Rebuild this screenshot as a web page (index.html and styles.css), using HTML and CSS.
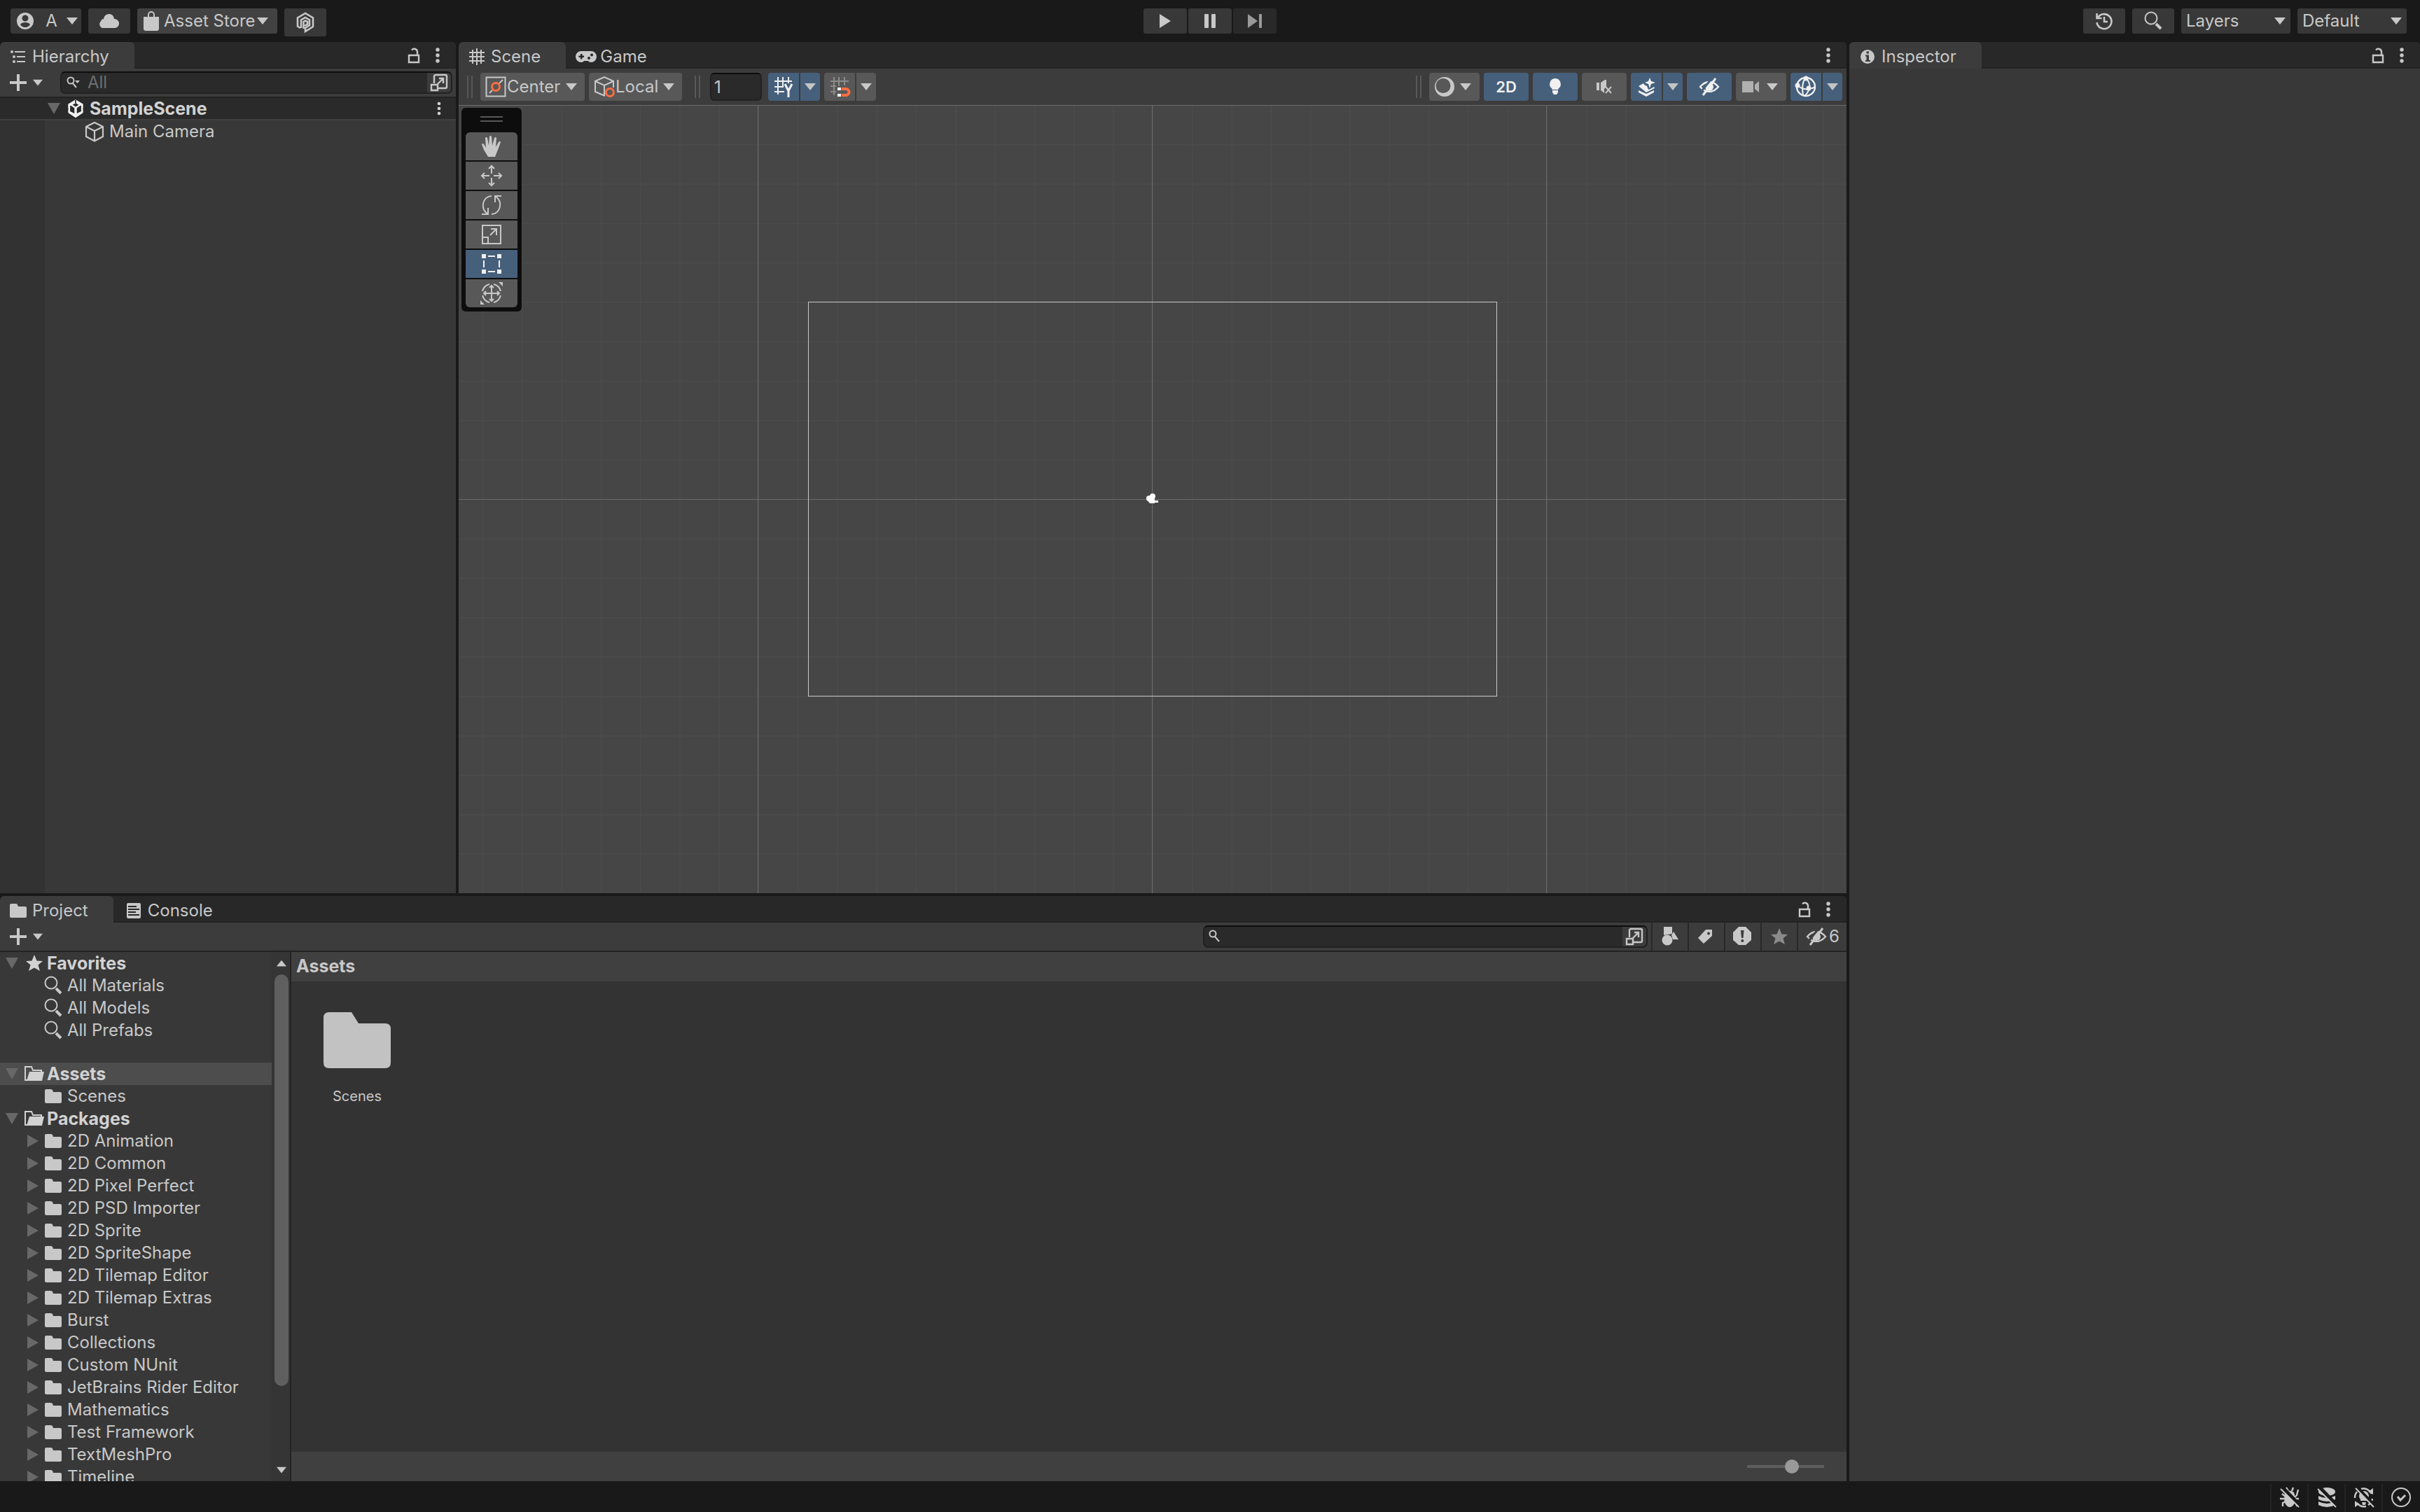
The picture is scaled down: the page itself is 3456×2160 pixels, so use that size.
FILE: index.html
```html
<!doctype html>
<html lang="en">

<head>
  <meta charset="utf-8">
  <title>SampleScene - Editor</title>
  <link rel="stylesheet" href="styles.css">
</head>

<body>
  <!-- icon sprite -->
  <svg class="sprite" aria-hidden="true">
    <mask id="m-down"><rect width="32" height="32" fill="#fff" /><path d="M4 0l28 29" stroke="#000" stroke-width="5" /></mask>
    <mask id="m-up"><rect width="32" height="32" fill="#fff" /><path d="M22 1L2 26" stroke="#000" stroke-width="3" /></mask>
    <symbol id="i-caret" viewBox="0 0 16 10"><path d="M0 0h16L8 10z" /></symbol>
    <symbol id="i-caret-up" viewBox="0 0 16 10"><path d="M0 10h16L8 0z" /></symbol>
    <symbol id="i-open" viewBox="0 0 18 18"><path d="M0 1h18L9 17z" /></symbol>
    <symbol id="i-closed" viewBox="0 0 18 18"><path d="M1 0v18l16-9z" /></symbol>
    <symbol id="i-user" viewBox="0 0 32 32"><path fill-rule="evenodd" d="M16 4a12 12 0 1 0 0 24a12 12 0 0 0 0-24zM16 7.500a4.500 4.500 0 1 1 0 9a4.500 4.500 0 0 1 0-9zM9 21c1-2 4-3 7-3s6 1 7 3c-1.500 2.500-4 4-7 4s-5.500-1.500-7-4z" /></symbol>
    <symbol id="i-cloud" viewBox="0 0 32 32"><path d="M8 26a5.500 5.500 0 0 1-4-9.500c.5-3 3-4 4-3C8 9 12 6 15.500 6c4 0 7 2.500 7.500 7c3.500 0 7 2.500 7 6.500S27 26 23.500 26z" /></symbol>
    <symbol id="i-bag" viewBox="0 0 32 32"><path d="M5 10h22v18l-2 2H7l-2-2z" /><path class="line" d="M12 12V7a4 4 0 0 1 8 0v5" /></symbol>
    <symbol id="i-package" viewBox="0 0 32 32"><path class="line" stroke-width="2.600" d="M9 24l-4-2.500V9.500L16 3l11 6.500V22l-11 7v-5l6-4v-7.500L16 9l-6 3.500V24M13.500 25V15l2.500-1.500l3 1.500v3.500L15 21" /></symbol>
    <symbol id="i-play" viewBox="0 0 32 32"><path d="M8 6l16 10L8 26z" /></symbol>
    <symbol id="i-pause" viewBox="0 0 32 32"><rect x="8" y="6" width="6" height="20" rx="1" /><rect x="18" y="6" width="6" height="20" rx="1" /></symbol>
    <symbol id="i-step" viewBox="0 0 32 32"><path d="M6 6l14 10L6 26z" /><rect x="22" y="6" width="4" height="20" rx="1" /></symbol>
    <symbol id="i-history" viewBox="0 0 32 32"><path class="line" stroke-width="2.600" d="M5.500 5v7h7M6.500 12a10.500 10.500 0 1 1-1 6M16 10v7h5" /></symbol>
    <symbol id="i-search" viewBox="0 0 32 32"><circle class="line" cx="13" cy="12" r="8.500" /><path class="line" stroke-width="4" d="M20 20l7 7" /></symbol>
    <symbol id="i-find" viewBox="0 0 32 32"><circle class="line" cx="7" cy="12" r="4.500" /><path class="line" d="M10 16l6 7" /></symbol>
    <symbol id="i-findmenu" viewBox="0 0 32 32"><circle class="line" cx="8" cy="13" r="4.500" /><path class="line" d="M11 17l5 6" /><path d="M14 13h7l-3.500 4z" /></symbol>
    <symbol id="i-popup" viewBox="0 0 32 32"><path class="line" stroke-width="2.400" d="M9 17V7a2 2 0 0 1 2-2h14a2 2 0 0 1 2 2v15a2 2 0 0 1-2 2H15M5 19h9v8H5zM14 18l8-8M16 10h6v7" /></symbol>
    <symbol id="i-lock" viewBox="0 0 32 32"><path class="line" stroke-width="2.400" d="M9 16h14v10H9zM21 16v-5a4.500 4.500 0 0 0-8-2.500" /></symbol>
    <symbol id="i-kebab" viewBox="0 0 32 32"><circle cx="16" cy="8" r="2.700" /><circle cx="16" cy="16" r="2.700" /><circle cx="16" cy="24" r="2.700" /></symbol>
    <symbol id="i-plus" viewBox="0 0 32 32"><path d="M14 4h4v10h10v4H18v10h-4V18H4v-4h10z" /></symbol>
    <symbol id="i-tree" viewBox="0 0 32 32"><circle cx="7" cy="9" r="2" /><circle cx="10" cy="16" r="2" /><circle cx="10" cy="23" r="2" /><path class="line" d="M11 9h15M14 16h12M14 23h12" /></symbol>
    <symbol id="i-unity" viewBox="0 0 32 32"><path fill-rule="evenodd" d="M16 1.500l12 7v6L24 11l-6 4v9l10-5v4L16 31L4 23v-4l10 5v-9l-6-4l-4 3.500v-6zM16 7l-5 3l5 3l5-3zM15 1h2v6h-2z" /><path d="M4 9v13l3-2v-7zM28 9v13l-3-2v-7z" /></symbol>
    <symbol id="i-cube" viewBox="0 0 32 32"><path class="line" stroke-width="2.200" d="M16 3l12 6v14l-12 6.500L4 23V9zM4 9l12 6l12-6M16 15v14" /></symbol>
    <symbol id="i-hash" viewBox="0 0 32 32"><path class="line" d="M10 6v20M16 4v24M22 6v20M5 10h22M5 16h22M5 22h22" /></symbol>
    <symbol id="i-pad" viewBox="0 0 32 32"><path fill-rule="evenodd" d="M9 8h14a7.500 7.500 0 0 1 0 16q-3 0-4-2h-6q-1 2-4 2A7.500 7.500 0 0 1 9 8zM8 12v2.500H5.500v2.500H8v2.500h2.500V17H13v-2.500h-2.500V12zM24 11.500a2 2 0 1 0 .1 0zM20 16a2 2 0 1 0 .1 0z" /></symbol>
    <symbol id="i-info" viewBox="0 0 32 32"><path fill-rule="evenodd" d="M16 6a10 10 0 1 0 0 20a10 10 0 0 0 0-20zM14.500 8.500h3.500v3h-3.500zM13 13.500h5V21h2v2h-7v-2h1.500v-5.500H13z" /></symbol>
    <symbol id="i-pivot" viewBox="0 0 32 32"><path class="line" d="M2.500 2.500h27v27h-27zM7 25l4-4M21 11l5-5" /><circle class="accent" stroke-width="3" cx="16" cy="16" r="5.500" /></symbol>
    <symbol id="i-local" viewBox="0 0 32 32"><path class="line" d="M17 29L3 23V8l13-6l13 6v9M3 8l13 6l13-6M16 14v14" /><circle class="accent" stroke-width="3" cx="24" cy="24" r="5.500" /></symbol>
    <symbol id="i-gridy" viewBox="0 0 32 32"><path class="line" d="M8 2v25M15 2v14M23 2v9M3 8h25M3 16h13M3 23h14" /><path class="line" stroke-width="3" d="M18 12l5 10l5-10M23 20v11" /></symbol>
    <symbol id="i-snap" viewBox="0 0 32 32"><path class="line dim" d="M8 2v26M15 2v13M23 2v12M3 8h26M3 15h8M3 23h8" /><path d="M13 17h5v4h-5zM13 26h5v4h-5z" /><path class="accent" stroke-width="4" d="M19 19h6a4.500 4.500 0 0 1 0 9h-6" /></symbol>
    <symbol id="i-shading" viewBox="0 0 32 32"><path fill-rule="evenodd" d="M16 2a14 14 0 1 0 0 28a14 14 0 0 0 0-28zM14 4a10.500 10.500 0 1 1 0 21a10.500 10.500 0 0 1 0-21z" /></symbol>
    <symbol id="i-bulb" viewBox="0 0 32 32"><path d="M16 4a8 8 0 0 1 4.500 14.500V20h-9v-1.500A8 8 0 0 1 16 4zM12 21h8v3l-2 3h-4l-2-3z" /></symbol>
    <symbol id="i-mute" viewBox="0 0 32 32"><path d="M5 10h4v11H5zM11 10l6-4h2v10l-3 3v6l-5-4z" /><path class="line" d="M18 16l8 9M26 16l-8 9" /></symbol>
    <symbol id="i-fx" viewBox="0 0 32 32"><path d="M21 3l2 5l6 2l-6 2l-2 6l-2-6l-5-2l5-2zM5 15l7-4l1 2l4 2l2 5l3-1l5-3l1 2l-12 6zM5 21l11 5l11-5v3l-11 6l-11-6z" /></symbol>
    <symbol id="i-hidden" viewBox="0 0 32 32"><g mask="url(#m-up)"><path class="line" stroke-width="2.400" d="M3 16q6-7 13-7t13 7q-6 7-13 7T3 16z" /><circle cx="16" cy="16" r="6" /></g><path class="line" stroke-width="3" d="M25 4L7 28" /></symbol>
    <symbol id="i-camera" viewBox="0 0 32 32"><path d="M3 8h16v16H3zM21 13l6-5v16l-6-5z" /></symbol>
    <symbol id="i-gizmo" viewBox="0 0 32 32"><circle class="line" stroke-width="2.400" cx="16" cy="16" r="13" /><path class="line" d="M16 3q7 8 5 15t-7 11M4 14q8 7 17 5t8-4M16 3q-7 7-4 25" /><circle cx="16" cy="4" r="3.500" /><circle cx="4" cy="14" r="3.500" /><circle cx="20" cy="18" r="3.500" /></symbol>
    <symbol id="i-hand" viewBox="0 0 32 32"><path d="M11 31L5 21L2 13q1-2 3 0l3 5L7 4q1-2 3 0l2 11l1-13q2-2 3 0l1 13l3-11q2-2 3 0l-1 13l4-7q2-2 3 0l-4 11l-4 10z" /></symbol>
    <symbol id="i-move" viewBox="0 0 32 32"><path class="line" d="M16 2v11M16 19v11M2 16h11M19 16h11M12 6l4-4l4 4M12 26l4 4l4-4M6 12l-4 4l4 4M26 12l4 4l-4 4" /></symbol>
    <symbol id="i-rotate" viewBox="0 0 32 32"><path class="line" d="M16 3C3 4-1 21 11 29M16 29C29 28 33 11 21 3M11 20v9H2M21 12V3h9" /></symbol>
    <symbol id="i-scale" viewBox="0 0 32 32"><path class="line" d="M3 3h26v26H3zM3 20h8v9M14 17l9-9M15 8h8v9" /></symbol>
    <symbol id="i-rect" viewBox="0 0 32 32"><path d="M2 2h6v6H2zM24 2h6v6h-6zM2 24h6v6H2zM24 24h6v6h-6z" /><path class="line" d="M11 5h10M11 27h10M5 11v10M27 11v10" /></symbol>
    <symbol id="i-transform" viewBox="0 0 32 32"><path class="line" d="M16 5v22M5 16h22M13 8l3-3l3 3M13 24l3 3l3-3M8 13l-3 3l3 3M24 13l3 3l-3 3M13 3Q5 5 3 13M19 3q8 2 10 10M13 29q-8-2-10-10M19 29q8-2 10-10" /><path d="M26 0h6v6zM0 26v6h6z" /></symbol>
    <symbol id="i-folder" viewBox="0 0 32 32"><path d="M4 8q0-2 2-2h7q2 0 2.500 2.500L16 10h10q2 0 2 2v12q0 2-2 2H6q-2 0-2-2z" /></symbol>
    <symbol id="i-folder-open" viewBox="0 0 32 32"><path class="line" d="M6 25H3V6h9l2 5h12v4" /><path d="M9 13h21l-3 13H5z" /></symbol>
    <symbol id="i-bigfolder" viewBox="0 0 96 80"><path d="M0 8q0-8 8-8h32l10 16h38q8 0 8 8v48q0 8-8 8H8q-8 0-8-8z" /></symbol>
    <symbol id="i-console" viewBox="0 0 32 32"><path fill-rule="evenodd" d="M8 5h16q2 0 2 2v18q0 2-2 2H8q-2 0-2-2V7q0-2 2-2zM8 9v2h12V9zM8 13v2h16v-2zM8 17v2h11v-2zM8 21v2h16v-2z" /></symbol>
    <symbol id="i-star" viewBox="0 0 32 32"><path d="M16 4l3.500 8.500l8.500.5l-6.500 5.500L24 27l-8-4.500L8 27l2.500-8.500L4 13l8.500-.5z" /></symbol>
    <symbol id="i-shapes" viewBox="0 0 32 32"><path d="M7 2h12v10l-6 1l-6 1zM21 9l7 11h-8l-2-6z" /><circle cx="12" cy="21" r="7.500" /></symbol>
    <symbol id="i-tag" viewBox="0 0 32 32"><path fill-rule="evenodd" d="M15 6h9v9L12 26l-8-8zM19 9.500a2 2 0 1 0 .1 0z" /></symbol>
    <symbol id="i-alert" viewBox="0 0 32 32"><path fill-rule="evenodd" d="M10 2h10l8 8v11l-8 7H10l-8-7V10zM13 7l1 11h2.500L17.500 7zM15.300 20a2 2 0 1 0 .1 0z" /></symbol>
    <symbol id="i-bug" viewBox="0 0 32 32"><g mask="url(#m-down)"><path d="M10 9q6-5 12 0q3 9 1 15q-3 6-7 6t-7-6q-2-6 1-15z" /><path class="line" stroke-width="2.400" d="M11 2l3 5M21 2l-2 5M28 5l-2 8l-3 3M23 18h6M22 22l4 2v5M9 18H2M10 22l-4 2v5M10 15l-5-4" /></g><path class="line" d="M3 4l26 26" /></symbol>
    <symbol id="i-cache" viewBox="0 0 32 32"><g mask="url(#m-down)"><ellipse cx="16" cy="8" rx="12" ry="6" /><path d="M4 14q12 6 24 0v5q-12 6-24 0zM4 22q12 6 24 0v5q-12 6-24 0z" /></g><path class="line" d="M3 4l26 26" /></symbol>
    <symbol id="i-sync" viewBox="0 0 32 32"><g mask="url(#m-down)"><path class="line" stroke-width="2.400" d="M12 4a13 13 0 0 1 15 7M28 18a13 13 0 0 1-6 9M19 29A13 13 0 0 1 6 24M3 17a13 13 0 0 1 3-9" /><path d="M29 3v9l-7-4zM3 30v-9l6 5z" /><circle cx="16" cy="14" r="7" /><path d="M11 18h10v3H11zM13 23h6l-1 4h-4z" /></g><path class="line" d="M4 3l26 27" /></symbol>
    <symbol id="i-ok" viewBox="0 0 32 32"><circle class="line" cx="16" cy="16" r="13" /><path class="line" stroke-width="3" d="M11 15l4 5l7-7" /></symbol>
    <symbol id="i-scenecam" viewBox="0 0 32 32"><circle cx="12" cy="15" r="4" /><circle cx="17" cy="12" r="4" /><path d="M11 14h9v8h-7l-3-4zM20 18h5v3h-5z" /></symbol>
  </svg>

  <header class="topbar">
    <div class="topbar-group">
      <button type="button" class="btn account"><svg class="icon"><use href="#i-user" /></svg>A<svg class="caret"><use href="#i-caret" /></svg></button>
      <button type="button" class="btn wide" aria-label="Cloud"><svg class="icon"><use href="#i-cloud" /></svg></button>
      <button type="button" class="btn store"><svg class="icon"><use href="#i-bag" /></svg>Asset Store<svg class="caret"><use href="#i-caret" /></svg></button>
      <button type="button" class="btn wide tall" aria-label="Package"><svg class="icon"><use href="#i-package" /></svg></button>
    </div>
    <div class="playback">
      <button type="button" class="btn" aria-label="Play"><svg class="icon"><use href="#i-play" /></svg></button>
      <button type="button" class="btn" aria-label="Pause"><svg class="icon"><use href="#i-pause" /></svg></button>
      <button type="button" class="btn off" aria-label="Step"><svg class="icon"><use href="#i-step" /></svg></button>
    </div>
    <div class="topbar-group right">
      <button type="button" class="btn wide" aria-label="History"><svg class="icon"><use href="#i-history" /></svg></button>
      <button type="button" class="btn wide" aria-label="Search"><svg class="icon"><use href="#i-search" /></svg></button>
      <label class="btn pick"><select aria-label="Layers"><option>Layers</option></select><svg class="caret"><use href="#i-caret" /></svg></label>
      <label class="btn pick"><select aria-label="Layout"><option>Default</option></select><svg class="caret"><use href="#i-caret" /></svg></label>
    </div>
  </header>

  <main class="workspace">
    <div class="left">
      <div class="upper">
        <section class="panel hierarchy">
          <div class="tabs">
            <button type="button" class="tab active"><svg class="icon"><use href="#i-tree" /></svg>Hierarchy</button>
            <div class="tabs-end">
              <button type="button" class="mini" aria-label="Lock"><svg class="icon"><use href="#i-lock" /></svg></button>
              <button type="button" class="mini" aria-label="Menu"><svg class="icon"><use href="#i-kebab" /></svg></button>
            </div>
          </div>
          <div class="bar">
            <button type="button" class="add" aria-label="Add"><svg class="icon"><use href="#i-plus" /></svg><svg class="caret"><use href="#i-caret" /></svg></button>
            <div class="search">
              <svg class="icon"><use href="#i-findmenu" /></svg>
              <input type="text" placeholder="All" aria-label="Search hierarchy">
              <button type="button" aria-label="Open search"><svg class="icon"><use href="#i-popup" /></svg></button>
            </div>
          </div>
          <div class="scene-row">
            <svg class="fold"><use href="#i-open" /></svg>
            <svg class="icon white"><use href="#i-unity" /></svg>
            <span>SampleScene</span>
            <button type="button" class="mini" aria-label="Scene menu"><svg class="icon"><use href="#i-kebab" /></svg></button>
          </div>
          <div class="objects">
            <div class="object-row"><svg class="icon"><use href="#i-cube" /></svg>Main Camera</div>
          </div>
        </section>

        <section class="panel scene">
          <div class="tabs">
            <button type="button" class="tab active"><svg class="icon"><use href="#i-hash" /></svg>Scene</button>
            <button type="button" class="tab"><svg class="icon"><use href="#i-pad" /></svg>Game</button>
            <div class="tabs-end">
              <button type="button" class="mini" aria-label="Menu"><svg class="icon"><use href="#i-kebab" /></svg></button>
            </div>
          </div>
          <div class="scene-bar">
            <div class="tools">
              <i class="grip"></i>
              <label class="tool drop center"><svg class="icon"><use href="#i-pivot" /></svg><select aria-label="Handle position"><option>Center</option></select><svg class="caret"><use href="#i-caret" /></svg></label>
              <label class="tool drop local"><svg class="icon"><use href="#i-local" /></svg><select aria-label="Handle rotation"><option>Local</option></select><svg class="caret"><use href="#i-caret" /></svg></label>
            </div>
            <div class="tools">
              <i class="grip"></i>
              <input class="grid-size" type="text" value="1" aria-label="Grid size">
              <div class="split on">
                <button type="button" class="tool" aria-label="Grid snapping"><svg class="icon"><use href="#i-gridy" /></svg></button>
                <button type="button" class="tool" aria-label="Grid options"><svg class="caret"><use href="#i-caret" /></svg></button>
              </div>
              <div class="split">
                <button type="button" class="tool" aria-label="Snap increment"><svg class="icon white"><use href="#i-snap" /></svg></button>
                <button type="button" class="tool" aria-label="Snap options"><svg class="caret"><use href="#i-caret" /></svg></button>
              </div>
            </div>
            <div class="tools last">
              <i class="grip"></i>
              <button type="button" class="tool menu" aria-label="Shading"><svg class="icon"><use href="#i-shading" /></svg><svg class="caret"><use href="#i-caret" /></svg></button>
              <button type="button" class="tool on two-d">2D</button>
              <button type="button" class="tool on" aria-label="Lighting"><svg class="icon"><use href="#i-bulb" /></svg></button>
              <button type="button" class="tool" aria-label="Audio"><svg class="icon"><use href="#i-mute" /></svg></button>
              <div class="split on">
                <button type="button" class="tool" aria-label="Effects"><svg class="icon"><use href="#i-fx" /></svg></button>
                <button type="button" class="tool" aria-label="Effect options"><svg class="caret"><use href="#i-caret" /></svg></button>
              </div>
              <button type="button" class="tool on" aria-label="Hidden objects"><svg class="icon"><use href="#i-hidden" /></svg></button>
              <button type="button" class="tool menu" aria-label="Camera"><svg class="icon cam"><use href="#i-camera" /></svg><svg class="caret"><use href="#i-caret" /></svg></button>
              <div class="split on">
                <button type="button" class="tool" aria-label="Gizmos"><svg class="icon"><use href="#i-gizmo" /></svg></button>
                <button type="button" class="tool" aria-label="Gizmo options"><svg class="caret"><use href="#i-caret" /></svg></button>
              </div>
            </div>
          </div>
          <div class="viewport">
            <svg class="canvas" viewBox="-991 -563 1982 1126" preserveAspectRatio="xMidYMid slice">
              <defs>
                <pattern id="minor" width="56.300" height="56.300" patternUnits="userSpaceOnUse"><path d="M0 0h57v1H1v56H0z" fill="#4d4d4d" /></pattern>
              </defs>
              <rect x="-1100" y="-620" width="2200" height="1240" fill="url(#minor)" />
              <path d="M-564-563h1v1126h-1zM-1-563h1v1126h-1zM562-563h1v1126h-1zM-991 0h1982v1H-991zM-991-563h1982v1H-991z" fill="#6c6c6c" />
              <rect x="-491.500" y="-281.500" width="983" height="563" fill="none" stroke="#c8c8c8" />
              <use href="#i-scenecam" x="-17" y="-16" width="32" height="32" fill="#fff" />
            </svg>
            <div class="toolbox">
              <i class="grip flat"></i>
              <button type="button" class="tool" aria-label="Hand"><svg class="icon"><use href="#i-hand" /></svg></button>
              <button type="button" class="tool" aria-label="Move"><svg class="icon"><use href="#i-move" /></svg></button>
              <button type="button" class="tool" aria-label="Rotate"><svg class="icon"><use href="#i-rotate" /></svg></button>
              <button type="button" class="tool" aria-label="Scale"><svg class="icon"><use href="#i-scale" /></svg></button>
              <button type="button" class="tool on" aria-label="Rect"><svg class="icon"><use href="#i-rect" /></svg></button>
              <button type="button" class="tool" aria-label="Transform"><svg class="icon"><use href="#i-transform" /></svg></button>
            </div>
          </div>
        </section>
      </div>

      <section class="panel project">
        <div class="tabs">
          <button type="button" class="tab active"><svg class="icon"><use href="#i-folder" /></svg>Project</button>
          <button type="button" class="tab"><svg class="icon"><use href="#i-console" /></svg>Console</button>
          <div class="tabs-end">
            <button type="button" class="mini" aria-label="Lock"><svg class="icon"><use href="#i-lock" /></svg></button>
            <button type="button" class="mini" aria-label="Menu"><svg class="icon"><use href="#i-kebab" /></svg></button>
          </div>
        </div>
        <div class="bar">
          <button type="button" class="add" aria-label="Add"><svg class="icon"><use href="#i-plus" /></svg><svg class="caret"><use href="#i-caret" /></svg></button>
          <div class="search">
            <svg class="icon"><use href="#i-find" /></svg>
            <input type="text" aria-label="Search project">
            <button type="button" aria-label="Open search"><svg class="icon"><use href="#i-popup" /></svg></button>
          </div>
          <div class="filters">
            <button type="button" aria-label="By type"><svg class="icon"><use href="#i-shapes" /></svg></button>
            <button type="button" aria-label="By label"><svg class="icon"><use href="#i-tag" /></svg></button>
            <button type="button" aria-label="By log"><svg class="icon"><use href="#i-alert" /></svg></button>
            <button type="button" class="dim" aria-label="Save search"><svg class="icon"><use href="#i-star" /></svg></button>
            <button type="button" class="count"><svg class="icon"><use href="#i-hidden" /></svg>6</button>
          </div>
        </div>
        <div class="browser">
          <div class="tree-wrap">
            <ul class="tree">
              <li class="root"><svg class="fold"><use href="#i-open" /></svg><svg class="icon"><use href="#i-star" /></svg>Favorites</li>
              <li><svg class="icon"><use href="#i-search" /></svg>All Materials</li>
              <li><svg class="icon"><use href="#i-search" /></svg>All Models</li>
              <li><svg class="icon"><use href="#i-search" /></svg>All Prefabs</li>
              <li class="root selected"><svg class="fold"><use href="#i-open" /></svg><svg class="icon"><use href="#i-folder-open" /></svg>Assets</li>
              <li><svg class="icon"><use href="#i-folder" /></svg>Scenes</li>
              <li class="root"><svg class="fold"><use href="#i-open" /></svg><svg class="icon"><use href="#i-folder-open" /></svg>Packages</li>
              <li class="sub"><svg class="fold"><use href="#i-closed" /></svg><svg class="icon"><use href="#i-folder" /></svg>2D Animation</li>
              <li class="sub"><svg class="fold"><use href="#i-closed" /></svg><svg class="icon"><use href="#i-folder" /></svg>2D Common</li>
              <li class="sub"><svg class="fold"><use href="#i-closed" /></svg><svg class="icon"><use href="#i-folder" /></svg>2D Pixel Perfect</li>
              <li class="sub"><svg class="fold"><use href="#i-closed" /></svg><svg class="icon"><use href="#i-folder" /></svg>2D PSD Importer</li>
              <li class="sub"><svg class="fold"><use href="#i-closed" /></svg><svg class="icon"><use href="#i-folder" /></svg>2D Sprite</li>
              <li class="sub"><svg class="fold"><use href="#i-closed" /></svg><svg class="icon"><use href="#i-folder" /></svg>2D SpriteShape</li>
              <li class="sub"><svg class="fold"><use href="#i-closed" /></svg><svg class="icon"><use href="#i-folder" /></svg>2D Tilemap Editor</li>
              <li class="sub"><svg class="fold"><use href="#i-closed" /></svg><svg class="icon"><use href="#i-folder" /></svg>2D Tilemap Extras</li>
              <li class="sub"><svg class="fold"><use href="#i-closed" /></svg><svg class="icon"><use href="#i-folder" /></svg>Burst</li>
              <li class="sub"><svg class="fold"><use href="#i-closed" /></svg><svg class="icon"><use href="#i-folder" /></svg>Collections</li>
              <li class="sub"><svg class="fold"><use href="#i-closed" /></svg><svg class="icon"><use href="#i-folder" /></svg>Custom NUnit</li>
              <li class="sub"><svg class="fold"><use href="#i-closed" /></svg><svg class="icon"><use href="#i-folder" /></svg>JetBrains Rider Editor</li>
              <li class="sub"><svg class="fold"><use href="#i-closed" /></svg><svg class="icon"><use href="#i-folder" /></svg>Mathematics</li>
              <li class="sub"><svg class="fold"><use href="#i-closed" /></svg><svg class="icon"><use href="#i-folder" /></svg>Test Framework</li>
              <li class="sub"><svg class="fold"><use href="#i-closed" /></svg><svg class="icon"><use href="#i-folder" /></svg>TextMeshPro</li>
              <li class="sub"><svg class="fold"><use href="#i-closed" /></svg><svg class="icon"><use href="#i-folder" /></svg>Timeline</li>
            </ul>
            <div class="scrollbar">
              <button type="button" aria-label="Scroll up"><svg class="caret"><use href="#i-caret-up" /></svg></button>
              <div class="track"><div class="thumb"></div></div>
              <button type="button" aria-label="Scroll down"><svg class="caret"><use href="#i-caret" /></svg></button>
            </div>
          </div>
          <div class="assets">
            <div class="crumbs">Assets</div>
            <div class="asset-grid">
              <a class="asset" href="#scenes"><svg class="big"><use href="#i-bigfolder" /></svg>Scenes</a>
            </div>
            <div class="asset-foot"><input type="range" min="0" max="100" value="60" aria-label="Icon size"></div>
          </div>
        </div>
      </section>
    </div>

    <section class="panel inspector">
      <div class="tabs">
        <button type="button" class="tab active"><svg class="icon"><use href="#i-info" /></svg>Inspector</button>
        <div class="tabs-end">
          <button type="button" class="mini" aria-label="Lock"><svg class="icon"><use href="#i-lock" /></svg></button>
          <button type="button" class="mini" aria-label="Menu"><svg class="icon"><use href="#i-kebab" /></svg></button>
        </div>
      </div>
    </section>
  </main>

  <footer class="status">
    <button type="button" aria-label="Debugger"><svg class="icon"><use href="#i-bug" /></svg></button>
    <button type="button" aria-label="Cache server"><svg class="icon"><use href="#i-cache" /></svg></button>
    <button type="button" aria-label="Auto refresh"><svg class="icon"><use href="#i-sync" /></svg></button>
    <button type="button" aria-label="Progress"><svg class="icon"><use href="#i-ok" /></svg></button>
  </footer>
</body>

</html>
```

FILE: styles.css
```css
* {
  box-sizing: border-box;
}

body {
  margin: 0;
  height: 100vh;
  display: flex;
  flex-direction: column;
  background: #191919;
  color: #c8c8c8;
  font-family: Inter, "Liberation Sans", sans-serif;
  font-size: 24px;
  line-height: 32px;
  overflow: hidden;
}

button,
input,
select {
  font: inherit;
  color: inherit;
  background: none;
  border: 0;
  margin: 0;
  padding: 0;
  outline: none;
}

button {
  display: flex;
  align-items: center;
  justify-content: center;
}

select {
  appearance: none;
  flex: 1;
  min-width: 0;
}

svg {
  fill: currentColor;
  flex: none;
}

.sprite {
  position: absolute;
  width: 0;
  height: 0;
}

.line {
  fill: none;
  stroke: currentColor;
}

.accent {
  fill: none;
  stroke: #ff6e40;
}

.dim {
  color: #8b8b8b;
}

.white {
  color: #f2f2f2;
}

.icon {
  width: 32px;
  height: 32px;
  stroke-width: 2px;
}

.caret {
  width: 16px;
  height: 10px;
}

/* top bar */

.topbar {
  display: grid;
  grid-template-columns: 1fr auto 1fr;
  height: 60px;
  padding-top: 12px;
}

.topbar-group {
  display: flex;
  align-items: flex-start;
  gap: 10px;
  padding-left: 15px;
}

.topbar-group.right {
  justify-content: flex-end;
  padding-right: 19px;
}

.btn {
  height: 36px;
  background: #383838;
  border-radius: 3px;
}

.btn.wide {
  width: 60px;
}

.btn.tall {
  height: 40px;
}

.account {
  width: 101px;
  gap: 13px;
}

.store {
  justify-content: flex-start;
  width: 200px;
  gap: 2px;
  padding-left: 4px;
  background: #424242;
}

.pick {
  display: flex;
  align-items: center;
  width: 156px;
  padding: 0 7px;
}

.playback {
  display: flex;
  gap: 2px;
}

.playback .btn {
  width: 62px;
}

.playback .off {
  background: #292929;
  color: #999;
}

/* panels */

.workspace {
  flex: 1;
  min-height: 0;
  display: flex;
  gap: 4px;
}

.left {
  flex: 2637;
  min-width: 0;
  display: flex;
  flex-direction: column;
  gap: 4px;
}

.upper {
  flex: 1216;
  min-height: 0;
  display: flex;
  gap: 4px;
}

.panel {
  display: flex;
  flex-direction: column;
  min-width: 0;
  min-height: 0;
  background: #383838;
  border-radius: 6px 6px 0 0;
  overflow: hidden;
}

.hierarchy {
  flex: 651;
}

.scene {
  flex: 1982;
}

.project {
  flex: 836;
}

.inspector {
  flex: 815;
}

.tabs {
  display: flex;
  flex: none;
  height: 38px;
  background: #282828;
  box-shadow: inset 0 -2px #232323;
}

.tab {
  gap: 4px;
  padding: 3px 36px 0 10px;
}

.tab + .tab {
  padding-left: 13px;
}

.tab.active {
  background: #3c3c3c;
  border-radius: 6px 6px 0 0;
}

.tabs-end {
  display: flex;
  margin-left: auto;
  padding-right: 9px;
}

.mini {
  width: 34px;
}

.bar {
  display: flex;
  align-items: center;
  flex: none;
  height: 42px;
  background: #3c3c3c;
  border-bottom: 2px solid #232323;
}

.add {
  gap: 5px;
  padding-left: 10px;
}

.add .caret {
  width: 14px;
}

.search {
  display: flex;
  align-items: center;
  flex: 1;
  height: 32px;
  margin: 0 5px 0 25px;
  padding-left: 5px;
  background: #2a2a2a;
  border: 2px solid #212121;
  border-top-color: #0d0d0d;
  border-radius: 7px;
}

.search input {
  flex: 1;
  min-width: 0;
}

.search input::placeholder {
  color: #6e6e6e;
}

.search button {
  width: 34px;
  height: 28px;
  background: #3c3c3c;
  border-radius: 0 5px 5px 0;
}

/* hierarchy */

.scene-row {
  display: flex;
  align-items: center;
  height: 32px;
  padding: 0 7px 0 68px;
  background: #2a2a2a;
  border-bottom: 2px solid #3f3f3f;
  font-size: 25px;
  font-weight: 700;
  color: #d2d2d2;
}

.scene-row .mini {
  margin-left: auto;
}

.scene-row .icon {
  height: 28px;
}

.fold {
  width: 18px;
  height: 18px;
  color: #686868;
}

.scene-row .fold {
  margin-right: 6px;
}

.scene-row span {
  margin-left: 4px;
}

.objects {
  flex: 1;
  padding-left: 64px;
  background: linear-gradient(to right, #323232 64px, #383838 64px);
}

.object-row {
  display: flex;
  align-items: center;
  gap: 5px;
  height: 32px;
  padding-left: 55px;
}

/* scene view */

.scene-bar {
  display: flex;
  flex: none;
  height: 52px;
  padding: 6px 6px 0 12px;
  background: #3c3c3c;
}

.tools {
  display: flex;
  gap: 6px;
  margin-right: 18px;
}

.tools.last {
  margin-left: auto;
  margin-right: 0;
}

.grip {
  width: 8px;
  height: 32px;
  margin: 4px 5px 0 0;
  border: solid #585858;
  border-width: 0 2px;
}

.tool {
  width: 64px;
  height: 40px;
  background: #585858;
  border-radius: 4px;
}

.tool.on,
.on .tool {
  background: #46607c;
  color: #f0f0f0;
}

.on .tool .caret {
  color: #c4c4c4;
}

.drop {
  display: flex;
  align-items: center;
  padding: 0 11px 0 6px;
}

.center {
  width: 149px;
}

.local {
  width: 133px;
}

.menu {
  width: 72px;
  gap: 6px;
  padding-right: 6px;
}

.cam {
  color: #b0b0b0;
}

.two-d {
  font-size: 22px;
  font-weight: 600;
}

.split {
  display: flex;
  gap: 2px;
}

.split .tool {
  width: 44px;
  border-radius: 4px 0 0 4px;
}

.split .tool:last-child {
  width: 28px;
  border-radius: 0 4px 4px 0;
}

.grid-size {
  width: 74px;
  height: 40px;
  margin: 0 3px;
  padding: 0 4px;
  background: #2a2a2a;
  border: 2px solid #212121;
  border-top-color: #0d0d0d;
  border-radius: 6px;
}

.viewport {
  flex: 1;
  min-height: 0;
  position: relative;
  background: #464646;
}

.canvas {
  display: block;
  width: 100%;
  height: 100%;
}

/* floats over the scene */
.toolbox {
  position: absolute;
  left: 4px;
  top: 4px;
  display: flex;
  flex-direction: column;
  align-items: center;
  gap: 2px;
  width: 86px;
  padding: 12px 6px 6px;
  background: #0d0d0d;
  border-radius: 6px;
}

.toolbox .tool {
  width: 74px;
  border-radius: 0;
}

.toolbox .tool:nth-of-type(1) {
  border-radius: 6px 6px 0 0;
}

.toolbox .tool:last-child {
  border-radius: 0 0 6px 6px;
}

.grip.flat {
  width: 32px;
  height: 8px;
  margin: 0 0 13px;
  border-width: 2px 0;
}

/* project */

.project .search {
  flex: none;
  width: 635px;
  margin: 0 5px 0 auto;
}

.filters {
  display: flex;
  align-self: stretch;
}

.filters button {
  width: 52px;
  border-left: 2px solid #282828;
}

.filters .count {
  width: 71px;
  gap: 2px;
}

.browser {
  display: flex;
  flex: 1;
  min-height: 0;
}

.tree-wrap {
  display: flex;
  flex: none;
  width: 416px;
  border-right: 2px solid #232323;
}

.tree {
  flex: 1;
  margin: 0;
  padding: 0;
  list-style: none;
  overflow: hidden;
}

.tree li {
  display: flex;
  align-items: center;
  gap: 4px;
  height: 32px;
  padding-left: 60px;
  white-space: nowrap;
}

.tree .sub {
  padding-left: 38px;
}

.tree .root {
  padding-left: 8px;
  font-size: 25px;
  font-weight: 700;
  color: #d2d2d2;
}

.tree .root .icon {
  margin: 0 -2px 0 3px;
}

.tree .selected {
  margin-top: 30px;
  background: #4d4d4d;
}

.scrollbar {
  display: flex;
  flex-direction: column;
  align-items: center;
  width: 26px;
  background: #353535;
  border-left: 1px solid #323232;
}

.scrollbar button {
  height: 32px;
}

.scrollbar .caret {
  width: 14px;
}

.track {
  flex: 1;
}

.thumb {
  width: 20px;
  height: 85%;
  background: #5f5f5f;
  border-radius: 10px;
}

.assets {
  flex: 1;
  display: flex;
  flex-direction: column;
  background: #333;
}

.crumbs {
  height: 42px;
  padding: 4px 7px;
  background: #404040;
  font-size: 25px;
  font-weight: 700;
}

.asset-grid {
  flex: 1;
  padding: 44px 30px;
}

.asset {
  display: flex;
  flex-direction: column;
  align-items: center;
  gap: 24px;
  width: 128px;
  color: inherit;
  font-size: 20px;
  text-decoration: none;
}

.big {
  width: 96px;
  height: 80px;
  color: #c2c2c2;
}

.asset-foot {
  display: flex;
  align-items: center;
  justify-content: flex-end;
  height: 42px;
  padding-right: 32px;
  background: #404040;
}

input[type="range"] {
  appearance: none;
  width: 110px;
  height: 20px;
}

input[type="range"]::-webkit-slider-runnable-track {
  height: 4px;
  background: #5e5e5e;
}

input[type="range"]::-webkit-slider-thumb {
  appearance: none;
  width: 20px;
  height: 20px;
  margin-top: -8px;
  background: #999;
  border-radius: 50%;
}

/* status bar */

.status {
  display: flex;
  justify-content: flex-end;
  height: 44px;
  padding: 4px 2px 0 0;
}

.status button {
  width: 53px;
  padding-bottom: 2px;
  border-left: 2px solid #242424;
}
```
